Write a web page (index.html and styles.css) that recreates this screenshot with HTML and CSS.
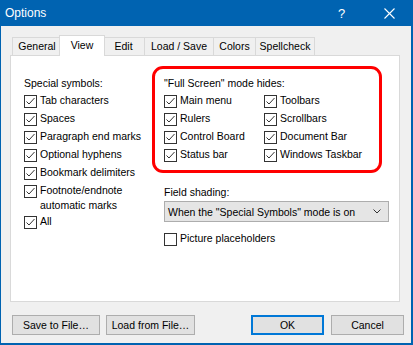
FILE: index.html
```html
<!DOCTYPE html>
<html lang="en">
<head>
    <meta charset="UTF-8">
    <title>Options</title>
    <link rel="stylesheet" href="styles.css">
</head>
<body>
    <div class="window">
        <div class="titlebar">
            <span class="title">Options</span>
            <span class="help">?</span>
            <span class="close">
                <svg width="11" height="11" viewBox="0 0 11 11"><path d="M0.5 0.5 L10.5 10.5 M10.5 0.5 L0.5 10.5" stroke="#fff" stroke-width="1.1" fill="none"/></svg>
            </span>
        </div>
        <div class="content">
            <div class="tabs">
                <div class="tab tab-general">General</div>
                <div class="tab tab-view active">View</div>
                <div class="tab tab-edit">Edit</div>
                <div class="tab tab-load">Load / Save</div>
                <div class="tab tab-colors">Colors</div>
                <div class="tab tab-spell">Spellcheck</div>
            </div>
            <div class="panel">
                <div class="col-left">
                    <div class="group-label">Special symbols:</div>
                    <div class="check"><span class="cb on"></span><span>Tab characters</span></div>
                    <div class="check"><span class="cb on"></span><span>Spaces</span></div>
                    <div class="check"><span class="cb on"></span><span>Paragraph end marks</span></div>
                    <div class="check"><span class="cb on"></span><span>Optional hyphens</span></div>
                    <div class="check"><span class="cb on"></span><span>Bookmark delimiters</span></div>
                    <div class="check wrap"><span class="cb on"></span><span>Footnote/endnote automatic marks</span></div>
                    <div class="check"><span class="cb on"></span><span>All</span></div>
                </div>
                <div class="col-right">
                    <div class="fullscreen">
                        <div class="group-label">"Full Screen" mode hides:</div>
                        <div class="fs-grid">
                            <div class="check"><span class="cb on"></span><span>Main menu</span></div>
                            <div class="check"><span class="cb on"></span><span>Toolbars</span></div>
                            <div class="check"><span class="cb on"></span><span>Rulers</span></div>
                            <div class="check"><span class="cb on"></span><span>Scrollbars</span></div>
                            <div class="check"><span class="cb on"></span><span>Control Board</span></div>
                            <div class="check"><span class="cb on"></span><span>Document Bar</span></div>
                            <div class="check"><span class="cb on"></span><span>Status bar</span></div>
                            <div class="check"><span class="cb on"></span><span>Windows Taskbar</span></div>
                        </div>
                    </div>
                    <div class="shading">
                        <div class="group-label">Field shading:</div>
                        <div class="select">
                            <span>When the "Special Symbols" mode is on</span>
                            <svg width="8" height="5" viewBox="0 0 8 5"><path d="M0.5 0.5 L4 4 L7.5 0.5" stroke="#333" stroke-width="1" fill="none"/></svg>
                        </div>
                        <div class="check picture"><span class="cb"></span><span>Picture placeholders</span></div>
                    </div>
                </div>
            </div>
            <div class="buttons">
                <button class="btn btn-save">Save to File…</button>
                <button class="btn btn-load">Load from File…</button>
                <span class="spacer"></span>
                <button class="btn btn-ok">OK</button>
                <button class="btn btn-cancel">Cancel</button>
            </div>
        </div>
    </div>

    <script>
        // draw the tick into every checked box
        const tick = '<svg width="11" height="11" viewBox="0 0 11 11"><path d="M1.5 5.5 L4 8 L9.5 2" stroke="#333" stroke-width="1" fill="none"/></svg>';
        document.querySelectorAll('.cb.on').forEach(box => {
            box.innerHTML = tick;
        });
    </script>
</body>
</html>
```
FILE: styles.css
```css
body {
    margin: 0;
    font-family: 'Liberation Sans', Arial, sans-serif;
    font-size: 10.5px;
    color: #000;
}
.window {
    width: 413px;
    height: 345px;
    box-sizing: border-box;
    background-color: #f0f0f0;
    border-left: 1px solid #0063b1;
    border-right: 2px solid #0063b1;
    border-bottom: 2px solid #0063b1;
    display: flex;
    flex-direction: column;
}
.titlebar {
    height: 26px;
    background-color: #0063b1;
    color: #fff;
    display: flex;
    align-items: center;
    padding-left: 4px;
}
.title {
    font-size: 12px;
    flex: 1;
}
.help {
    font-size: 13px;
    width: 14px;
    margin-right: 32px;
}
.close {
    display: flex;
    margin-right: 16px;
}
.content {
    padding-left: 9px;
}
.tabs {
    display: flex;
    align-items: flex-end;
    height: 20px;
    margin-top: 9px;
    margin-left: 2px;
}
.tab {
    box-sizing: border-box;
    height: 18px;
    line-height: 17px;
    text-align: center;
    border: 1px solid #d9d9d9;
    border-bottom: none;
    margin-right: -1px;
    background-color: #f0f0f0;
}
.tab-general { width: 50px; }
.tab-view { width: 42px; }
.tab-edit { width: 43px; }
.tab-load { width: 70px; }
.tab-colors { width: 43px; }
.tab-spell { width: 60px; }
.tab.active {
    position: relative;
    z-index: 1;
    width: 46px;
    height: 21px;
    line-height: 18px;
    margin: 0 -3px -1px -2px;
    background-color: #fff;
}
.panel {
    box-sizing: border-box;
    width: 390px;
    height: 247px;
    background-color: #fff;
    border: 1px solid #d9d9d9;
    display: flex;
}
.col-left {
    width: 128px;
    padding-left: 13px;
    padding-top: 18px;
}
.group-label {
    height: 18px;
    line-height: 18px;
}
.check {
    display: flex;
    align-items: flex-start;
    height: 18px;
    line-height: 17px;
}
.cb {
    box-sizing: border-box;
    width: 13px;
    height: 13px;
    margin-top: 3px;
    margin-right: 3px;
    border: 1px solid #333;
    background-color: #fff;
    display: flex;
    flex-shrink: 0;
}
.check.wrap {
    height: 31px;
    line-height: 15px;
}
.check.wrap span:last-child {
    padding-top: 1px;
}
.col-right {
    padding-top: 10px;
}
.fullscreen {
    box-sizing: border-box;
    width: 230px;
    height: 107px;
    border: 3px solid #ff0000;
    border-radius: 11px;
    padding: 5px 0 0 9px;
}
.fs-grid {
    display: grid;
    grid-template-columns: 100px 1fr;
}
.shading {
    margin-left: 12px;
    margin-top: 10px;
}
.select {
    box-sizing: border-box;
    width: 225px;
    height: 21px;
    background-color: #e5e5e5;
    border: 1px solid #adadad;
    display: flex;
    align-items: center;
    justify-content: space-between;
    padding: 0 7px 0 3px;
}
.check.picture {
    margin-top: 8px;
}
.buttons {
    display: flex;
    margin-top: 13px;
    margin-left: 2px;
}
.btn {
    box-sizing: border-box;
    height: 20px;
    padding: 0;
    font-family: inherit;
    font-size: 10.5px;
    color: #000;
    background-color: #e1e1e1;
    border: 1px solid #adadad;
}
.btn-save { width: 88px; margin-right: 6px; }
.btn-load { width: 89px; }
.spacer { flex: 1; }
.btn-ok {
    width: 73px;
    margin-right: 7px;
    border: 2px solid #0078d7;
}
.btn-cancel { width: 73px; margin-right: 7px; }
```
